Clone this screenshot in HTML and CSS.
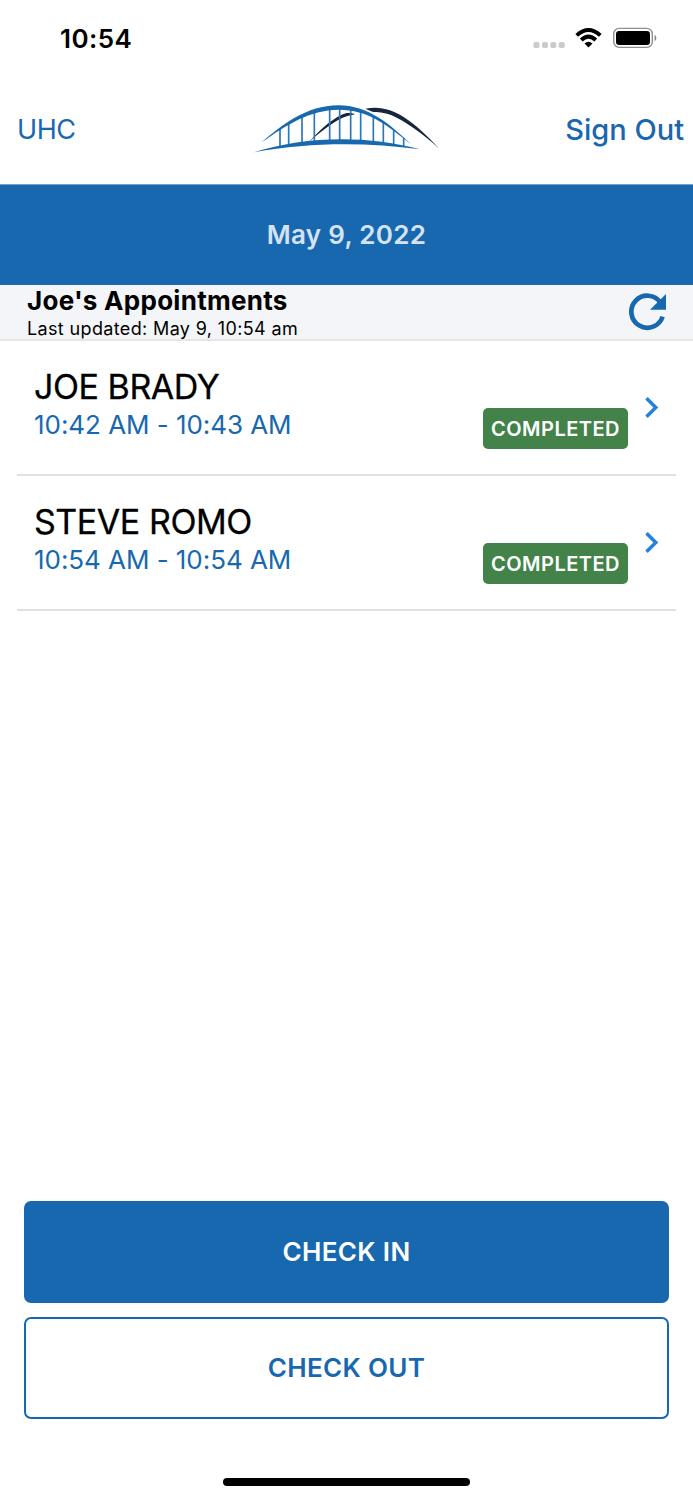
FILE: index.html
```html
<!DOCTYPE html>
<html lang="en">
<head>
<meta charset="utf-8">
<title>Joe's Appointments</title>
<link rel="stylesheet" href="styles.css">
</head>
<body>
<div class="screen">
  <div class="status">
    <span class="clock">10:54</span>
    <svg class="status-icons" width="124" height="24" viewBox="0 0 124 24">
      <g fill="#cbcbcb"><rect x="0.5" y="15" width="6" height="6" rx="1.8"/><rect x="9" y="15" width="6" height="6" rx="1.8"/><rect x="17.3" y="15" width="6" height="6" rx="1.8"/><rect x="25.7" y="15" width="6" height="6" rx="1.8"/></g>
      <g fill="none" stroke="#000" stroke-width="3.9">
        <path d="M43.7 8.4Q55.5 -2.3 67.3 8.4"/>
        <path d="M48.2 13Q55.500 6.300 62.800 13"/>
      </g>
      <path d="M51.500 16.500Q55.500 13 59.500 16.500L55.500 20.600Z"/>
      <rect x="80.700" y="1.400" width="38.600" height="19" rx="5.500" fill="none" stroke="#8e8e8e" stroke-width="1.400"/>
      <rect x="83" y="4" width="34" height="14" rx="3.200"/>
      <path d="M121.500 7.800Q123.400 8.800 123.400 11T121.500 14.200Z" fill="#8e8e8e"/>
    </svg>
  </div>
  <header class="nav">
    <a class="nav-left">UHC</a>
    <svg class="logo" width="210" height="75" viewBox="0 0 630 225">
      <path d="M208 155C240 118 285 78 320 69C332 68 342 70 345 73L325 77C285 88 240 127 208 155Z" fill="#18253d"/>
      <path d="M376 56C450 42 510 82 598 176C535 120 490 92 455 76C432 66 412 67 397 65Z" fill="#18253d"/>
      <path d="M120 114V171M146 99V168M186 78V163M223 65V160M269 57V157M299 55V157M332 58V157M362 65V158M400 82V159M430 98V161M461 121V165M491 143V169" stroke="#2a77ba" stroke-width="5"/>
      <path d="M65 157C125 105 200 46 295 46C385 46 450 103 513 163C440 104 385 59 295 59C210 60 140 104 65 157Z" fill="#1868b0"/>
      <path d="M42 187C190 139 380 134 540 178C385 158 215 155 42 187Z" fill="#1868b0"/>
    </svg>
    <a class="nav-right">Sign Out</a>
  </header>
  <div class="date"><span>May 9, 2022</span></div>
  <div class="summary">
    <div>
      <h1>Joe's Appointments</h1>
      <p class="updated">Last updated: May 9, 10:54 am</p>
    </div>
    <svg class="refresh" width="40" height="40" viewBox="0 0 40 40">
      <path d="M34.600 24.600A16 16 0 1 1 32.500 10.600" fill="none" stroke="#1868b0" stroke-width="4.700"/>
      <path d="M38 2V17.800H22Z" fill="#1868b0"/>
    </svg>
  </div>
  <main class="list">
    <article class="row">
      <div class="info"><h2>JOE BRADY</h2><p class="time">10:42 AM - 10:43 AM</p></div>
      <span class="badge">COMPLETED</span>
      <svg class="chevron" width="14" height="22" viewBox="0 0 14 22"><path d="M1.500 1.200L10.800 10.500L1.500 19.800" fill="none" stroke="#2382dc" stroke-width="3.500"/></svg>
    </article>
    <article class="row">
      <div class="info"><h2>STEVE ROMO</h2><p class="time">10:54 AM - 10:54 AM</p></div>
      <span class="badge">COMPLETED</span>
      <svg class="chevron" width="14" height="22" viewBox="0 0 14 22"><path d="M1.500 1.200L10.800 10.500L1.500 19.800" fill="none" stroke="#2382dc" stroke-width="3.500"/></svg>
    </article>
  </main>
  <footer class="actions">
    <button class="button primary">CHECK IN</button>
    <button class="button outline">CHECK OUT</button>
    <div class="home"></div>
  </footer>
</div>
</body>
</html>
```
FILE: styles.css
```css
* { box-sizing: border-box; }
body { margin: 0; background: #fff; font-family: Inter, "Liberation Sans", sans-serif; }
h1, h2, p { margin: 0; }
.screen { width: 693px; height: 1500px; display: flex; flex-direction: column; }
.status { height: 76px; padding: 2px 36px 0 60px; display: flex; justify-content: space-between; align-items: center; }
.clock { font-size: 26px; font-weight: 600; line-height: 32px; letter-spacing: 0.4px; }
.nav { height: 108px; padding: 0 9px 0 17px; display: grid; grid-template-columns: 223px 210px 1fr; align-items: center; color: #1868b0; }
.nav-left { font-size: 27px; line-height: 34px; letter-spacing: -0.4px; }
.nav-right { font-size: 29px; line-height: 34px; font-weight: 500; text-align: right; white-space: nowrap; margin-bottom: 1px; }
.logo { align-self: start; margin-top: 14px; }
.date { height: 101px; padding-bottom: 2px; border-top: 1px solid #739fc8; background: #1868b0; color: #d5e3f1; font-size: 26px; font-weight: 600; letter-spacing: 0.3px; display: flex; align-items: center; justify-content: center; }
.summary { height: 56px; padding: 0 25px 0 27px; background: #f4f5f8; border-bottom: 2px solid #e6e6e7; display: flex; justify-content: space-between; }
h1 { font-size: 26px; line-height: 32px; font-weight: 700; letter-spacing: 0.28px; }
.updated { font-size: 18px; line-height: 24px; letter-spacing: 0.36px; }
.refresh { margin-top: 7px; }
.list { padding: 0 17px; flex: 1; }
.row { height: 135px; padding: 0 17px; border-bottom: 2px solid #e2e0e2; display: flex; }
.info { flex: 1; padding-top: 25px; }
h2 { font-size: 34px; line-height: 42px; font-weight: 400; letter-spacing: -0.45px; -webkit-text-stroke: 0.3px #000; }
.time { font-size: 26px; line-height: 34px; color: #1868b0; letter-spacing: -0.05px; }
.badge { width: 145px; height: 41px; margin-top: 67px; border-radius: 5px; background: #43834a; color: #fff; font-size: 20px; font-weight: 600; letter-spacing: 0.5px; display: flex; align-items: center; justify-content: center; }
.chevron { margin: 56px 0 0 17px; }
.actions { height: 299px; padding: 0 24px; display: flex; flex-direction: column; align-items: center; }
.button { width: 645px; height: 102px; flex: none; margin: 0 0 14px; padding: 0 0 1px; border: 2px solid #1868b0; border-radius: 7px; font: 600 26px Inter, "Liberation Sans", sans-serif; letter-spacing: 0.35px; }
.primary { background: #1868b0; color: #fff; }
.outline { background: #fff; color: #1868b0; }
.home { width: 247px; height: 8px; margin-top: 45px; border-radius: 4px; background: #000; }
```
